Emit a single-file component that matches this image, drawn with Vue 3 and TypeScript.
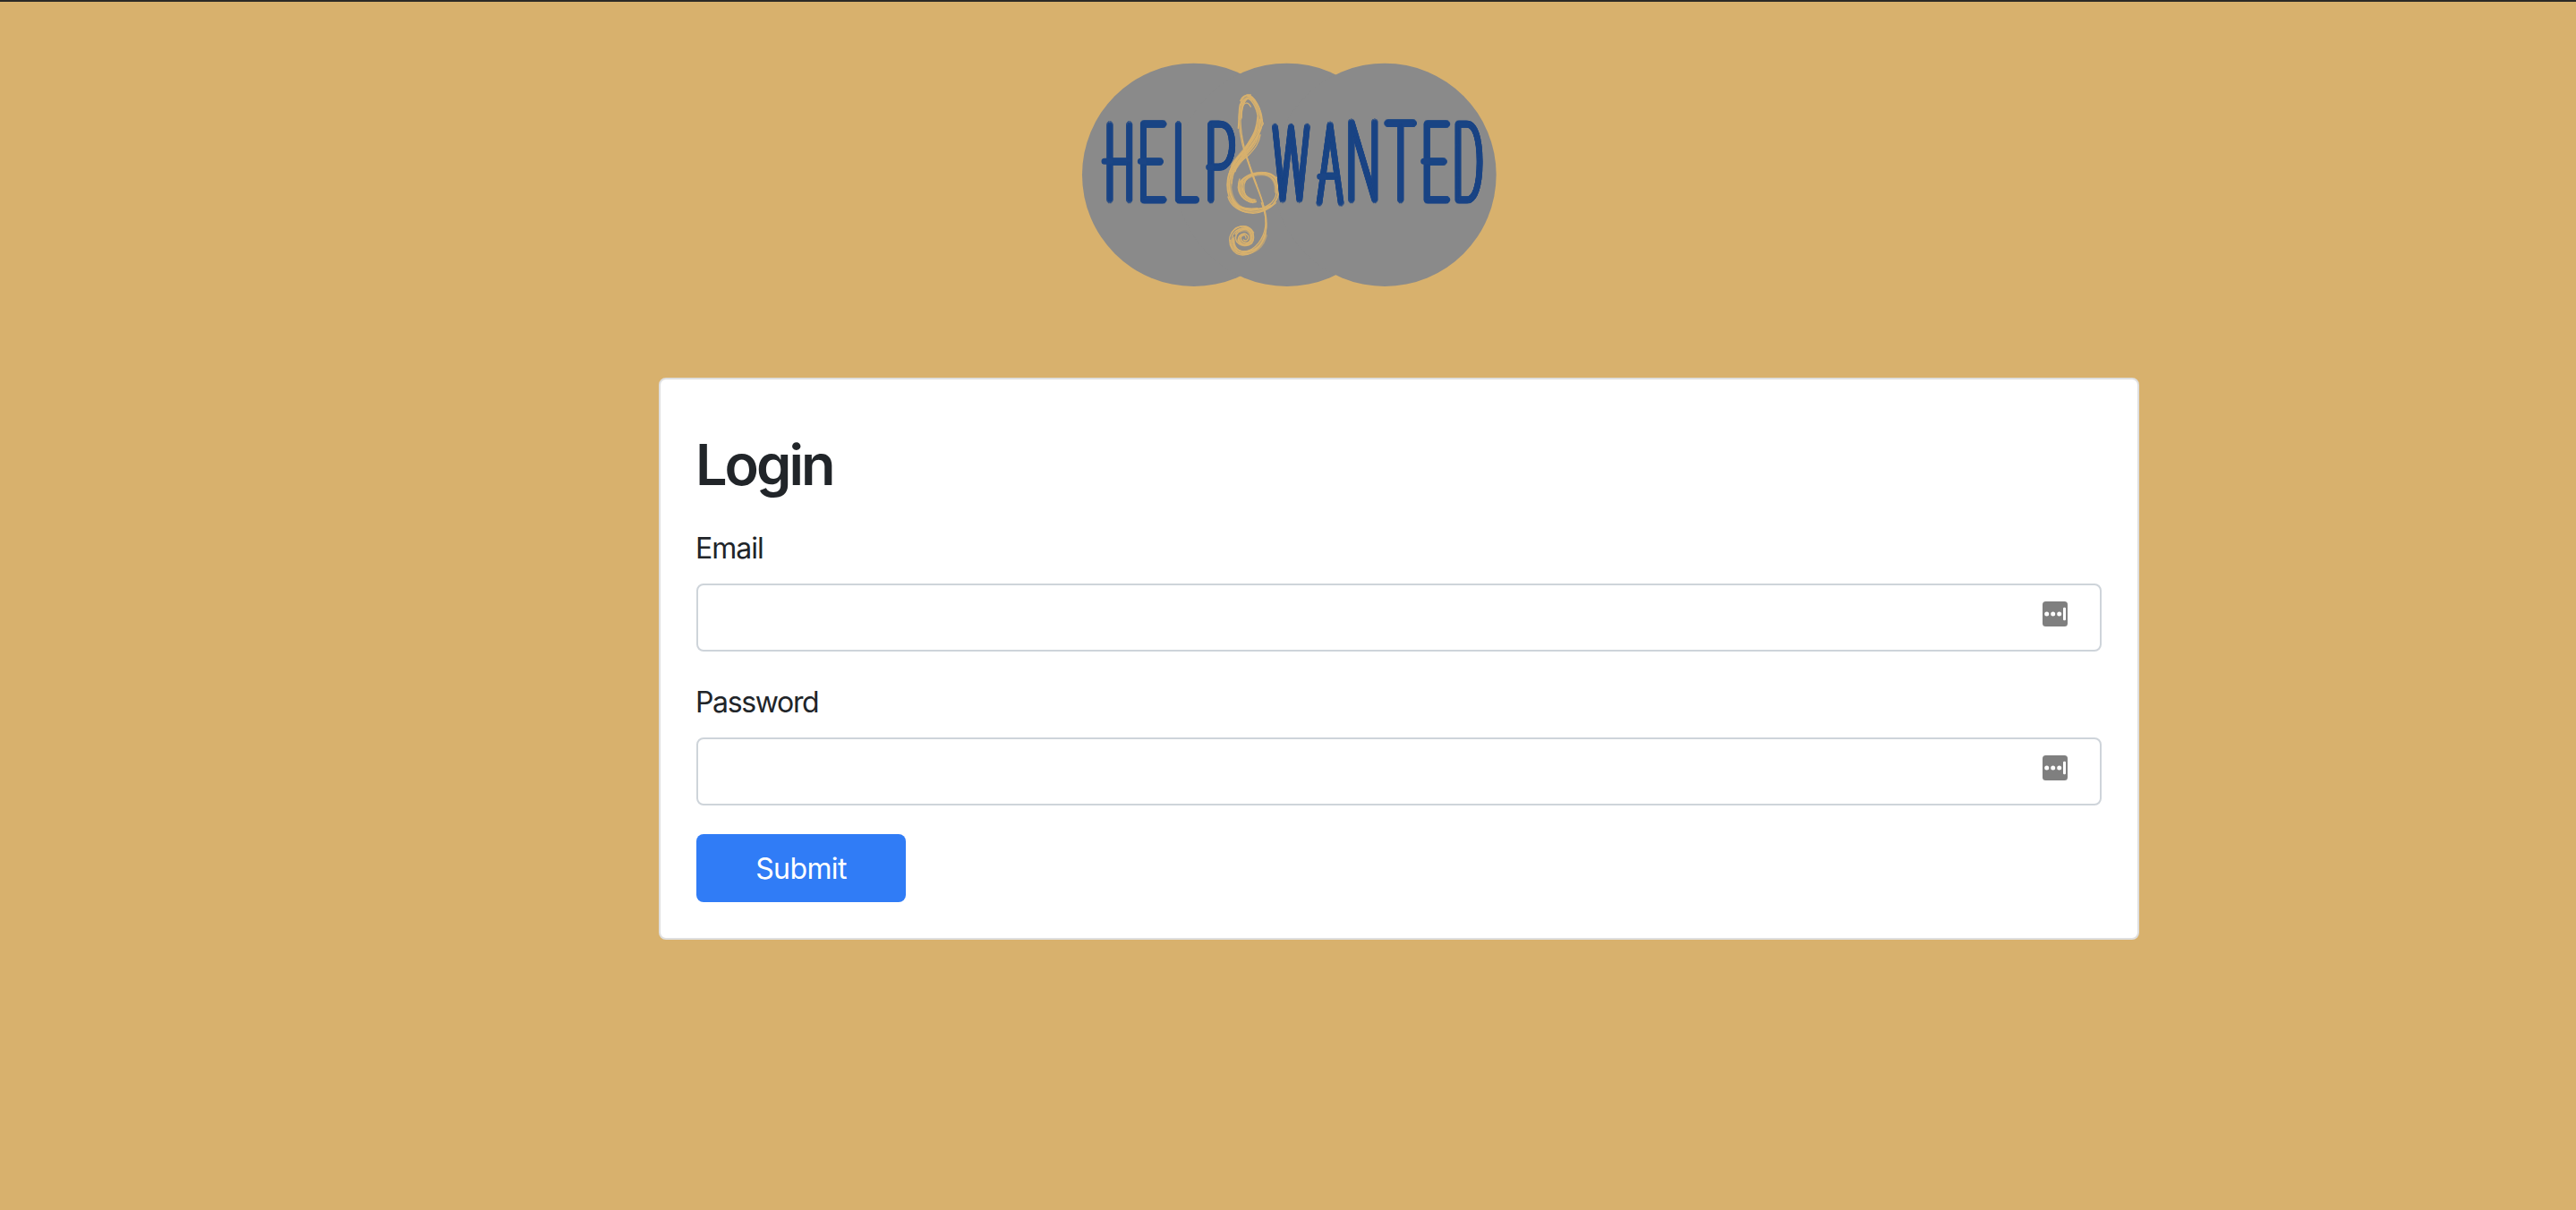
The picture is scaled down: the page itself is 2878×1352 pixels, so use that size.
<script setup lang="ts">
import { ref } from 'vue'

interface Letter {
  ch: string
  x: number
  y: number
  sx: number
  sy: number
}

const help: Letter[] = [
  { ch: 'H', x: 152.5, y: 492, sx: 0.363, sy: 1.025 },
  { ch: 'E', x: 261, y: 492, sx: 0.475, sy: 1.025 },
  { ch: 'L', x: 371, y: 492, sx: 0.472, sy: 1.025 },
  { ch: 'P', x: 488, y: 492, sx: 0.52, sy: 1.025 },
]
const wanted: Letter[] = [
  { ch: 'W', x: 727, y: 491, sx: 0.325, sy: 0.99 },
  { ch: 'A', x: 858, y: 502, sx: 0.35, sy: 1.055 },
  { ch: 'N', x: 968.5, y: 493, sx: 0.43, sy: 1.05 },
  { ch: 'T', x: 1094, y: 492, sx: 0.465, sy: 1.045 },
  { ch: 'E', x: 1211, y: 492, sx: 0.475, sy: 1.025 },
  { ch: 'D', x: 1320, y: 492, sx: 0.36, sy: 1.025 },
]

// Copies of the hairline lettering on two rings give it an even, round-ended weight.
const spread = [9, 4.5].flatMap((r) =>
  Array.from({ length: 16 }, (_, i) => {
    const a = (i * Math.PI) / 8
    return { x: +(Math.cos(a) * r).toFixed(2), y: +(Math.sin(a) * r).toFixed(2) }
  }),
)

const email = ref('')
const password = ref('')
</script>

<template>
  <main class="page">
    <header class="banner">
      <svg class="logo" viewBox="0 0 1440 810" role="img" aria-label="Help Wanted">
        <g fill="#8a8a8a">
          <circle cx="401" cy="406" r="374" />
          <circle cx="713" cy="406" r="374" />
          <circle cx="1041" cy="406" r="374" />
        </g>
        <g id="help" class="word">
          <text
            v-for="l in help"
            :key="l.x"
            text-anchor="middle"
            :transform="`translate(${l.x} ${l.y}) scale(${l.sx} ${l.sy})`"
          >{{ l.ch }}</text>
        </g>
        <use v-for="(o, i) in spread" :key="i" href="#help" :x="o.x" :y="o.y" />
        <path class="swash" d="M102 361H119M223 361H232M452 380.500H460" />
        <g class="clef">
          <g class="wash">
            <path stroke-width="18" d="M521 440C523 390 545 362 578 325C606 292 622 262 624 225" />
            <path stroke-width="26" d="M538 375C558 345 590 316 608 280" />
            <path stroke-width="14" d="M521 440C523 480 540 524 592 527C620 527 640 522 655 510M557 215C556 170 570 146 584 146C602 150 616 180 622 215" />
            <path stroke-width="14" d="M605 494C575 490 556 468 558 446C562 418 595 402 628 402C666 402 680 430 678 462" />
            <path stroke-width="14" d="M532 625C532 655 550 670 572 668C605 664 630 648 640 610M556 592C580 580 598 600 596 622C592 642 562 645 552 628" />
          </g>
          <path d="M610 496C580 502 553 480 550 450C547 415 600 400 630 400C670 398 687 425 685 465C682 510 635 530 590 532C545 532 513 490 513 440C514 380 550 350 580 315C608 280 622 255 626 225C630 185 605 142 582 138C560 140 553 180 553 225C555 290 572 330 592 390C610 450 645 510 645 570C645 635 605 675 565 675C530 674 518 640 522 615C530 585 560 573 580 580C602 592 608 620 595 636C578 650 552 640 550 622C552 605 572 598 583 610C588 622 576 632 568 624" />
          <path d="M606 490C575 494 560 470 562 448C565 420 590 404 625 403C665 404 680 430 678 465C676 500 640 522 592 526C553 524 523 490 520 440C520 395 548 362 582 322C615 285 630 250 631 225C628 185 608 155 588 146C566 148 558 185 558 228C560 290 578 345 598 405C622 465 642 510 642 568C640 620 605 662 568 663C542 660 528 640 530 612C538 590 562 580 582 590C600 602 600 624 588 632C570 638 556 628 560 614C567 604 577 608 576 618" />
          <path d="M600 500C562 490 553 465 556 440C562 415 595 396 640 398C672 402 684 420 682 450" />
          <path d="M596 494C572 486 568 460 570 438C574 420 590 408 612 404" />
          <path d="M518 470C508 420 524 370 556 338C590 300 612 270 618 228C618 190 600 158 583 150C568 158 560 190 561 214" />
          <path d="M528 435C530 385 560 350 590 312C616 282 626 245 634 235L618 192C610 170 600 145 580 141" />
          <path d="M524 420C530 380 556 356 570 330C592 300 606 280 612 240M540 395C548 365 575 342 596 318C618 292 622 260 622 220" />
          <path d="M522 405C535 365 566 332 585 298C598 275 610 262 615 212M535 400C540 375 560 360 585 340C606 318 620 300 624 272" />
          <path d="M548 375C565 345 590 320 604 296M562 340C575 305 600 285 612 252M556 170L550 250M557 158C562 145 575 137 592 138M560 172C565 152 580 145 596 155M564 180C570 162 584 160 592 178" />
          <path d="M516 480C524 508 550 532 600 535C635 532 655 520 676 500M530 490C545 515 580 522 615 518M535 500C555 528 610 528 660 510M520 425C516 460 530 505 560 524" />
          <path d="M555 420C545 445 552 480 590 498M565 425C558 450 570 482 605 493M680 415C690 440 688 480 670 500M605 405C635 396 665 404 676 415" />
          <path d="M580 350L612 440M628 500C640 530 648 560 642 600C636 640 605 668 560 668C540 668 526 650 524 625M536 615C532 645 548 668 580 662C615 658 635 635 641 600" />
          <path d="M540 605C550 580 590 575 600 605C608 640 565 655 545 630C535 610 550 590 575 588C605 600 592 640 570 640C545 634 552 600 575 604M528 600C545 570 590 574 602 600M534 640C540 665 560 675 590 670" />
        </g>
        <g id="wanted" class="word">
          <text
            v-for="l in wanted"
            :key="l.x"
            text-anchor="middle"
            :transform="`translate(${l.x} ${l.y}) scale(${l.sx} ${l.sy})`"
          >{{ l.ch }}</text>
        </g>
        <use v-for="(o, i) in spread" :key="i" href="#wanted" :x="o.x" :y="o.y" />
        <path class="swash" d="M824 411.500H836M1172 361H1182" />
      </svg>
    </header>

    <form class="card" @submit.prevent>
      <h1>Login</h1>
      <label for="email">Email</label>
      <div class="field">
        <input id="email" v-model="email" type="email" />
        <svg class="key" viewBox="0 0 28 28">
          <rect width="28" height="28" rx="3.5" fill="#7f7f7f" />
          <circle cx="4.7" cy="14" r="2.5" /><circle cx="11.7" cy="14" r="2.5" /><circle cx="18.7" cy="14" r="2.5" />
          <rect x="23" y="6.8" width="3" height="14.4" rx="1.2" />
        </svg>
      </div>
      <label for="password">Password</label>
      <div class="field">
        <input id="password" v-model="password" type="password" />
        <svg class="key" viewBox="0 0 28 28">
          <rect width="28" height="28" rx="3.5" fill="#7f7f7f" />
          <circle cx="4.7" cy="14" r="2.5" /><circle cx="11.7" cy="14" r="2.5" /><circle cx="18.7" cy="14" r="2.5" />
          <rect x="23" y="6.8" width="3" height="14.4" rx="1.2" />
        </svg>
      </div>
      <button type="submit">Submit</button>
    </form>
  </main>
</template>

<style>
body {
  margin: 0;
  background: #d8b16d;
}
</style>

<style scoped>
.page {
  box-sizing: border-box;
  min-height: 1352px;
  border-top: 2px solid #2b2a27;
  background: #d8b16d;
  color: #212529;
  font-family: Inter, "Liberation Sans", sans-serif;
}
.banner {
  display: flex;
  margin: 0 0 0 1200px;
  padding-top: 58px;
}
.logo {
  display: block;
  width: 480px;
  height: 270px;
}
.clef {
  fill: none;
  stroke: #d8b16d;
  stroke-width: 4;
  stroke-linecap: round;
  stroke-linejoin: round;
}
.wash {
  opacity: 0.6;
}
.word text {
  font-family: Lato, Inter, sans-serif;
  font-weight: 100;
  font-size: 358px;
  fill: #1b4585;
  stroke: #1b4585;
  stroke-width: 2px;
}
.swash {
  fill: none;
  stroke: #1b4585;
  stroke-width: 21;
  stroke-linecap: round;
}
.card {
  box-sizing: border-box;
  display: flex;
  flex-direction: column;
  width: 1654px;
  height: 628px;
  margin: 92px 0 0 736px;
  padding: 56px 40px 40px;
  border: 2px solid #dfdfdf;
  border-radius: 8px;
  background: #fff;
}
h1 {
  margin: 0 0 30px -1px;
  font-size: 63px;
  line-height: 78px;
  font-weight: 600;
  letter-spacing: -3px;
}
label {
  margin: 1px 0 15px -1px;
  font-size: 32px;
  line-height: 48px;
  font-weight: 430;
  letter-spacing: -1.35px;
}
label[for="email"] {
  letter-spacing: -1px;
}
.field {
  position: relative;
  height: 76px;
  margin-bottom: 32px;
}
input {
  box-sizing: border-box;
  display: block;
  width: 100%;
  height: 76px;
  padding: 12px 24px;
  border: 2px solid #ced4da;
  border-radius: 8px;
  background: #fff;
  font: inherit;
  font-size: 32px;
  outline: none;
}
.key {
  position: absolute;
  top: 20px;
  right: 38px;
  width: 28px;
  height: 28px;
  fill: #fff;
}
button {
  width: 234px;
  height: 76px;
  padding: 1px 0 0;
  border: 0;
  border-radius: 8px;
  background: #307cf6;
  color: #fff;
  font: inherit;
  font-size: 32px;
  font-weight: 430;
  line-height: 75px;
  letter-spacing: -0.6px;
}
</style>
